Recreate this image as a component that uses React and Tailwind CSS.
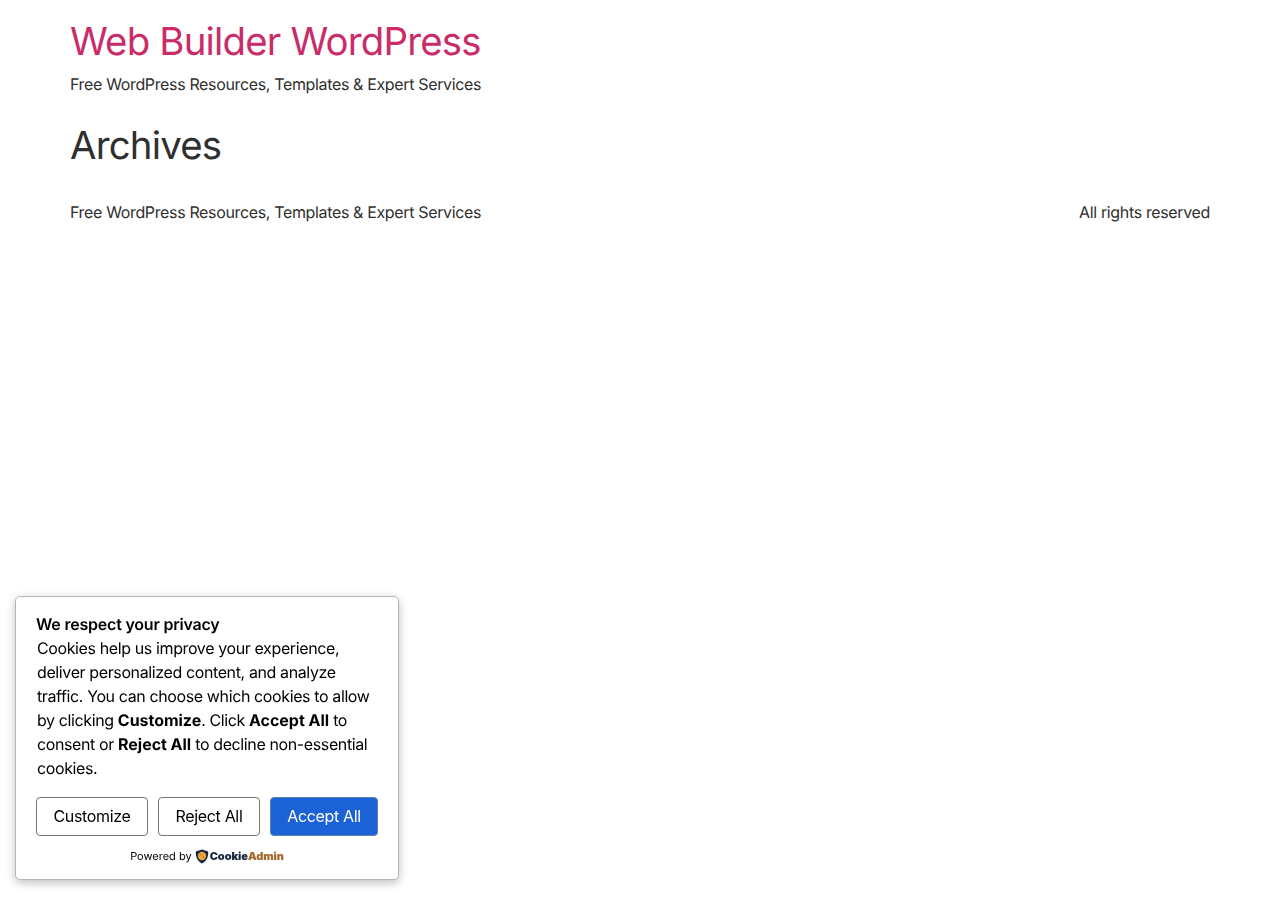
function CookieAdminLogo() {
  return (
    <span className="inline-flex items-center">
      <svg width="14" height="15" viewBox="0 0 14 15" className="-ml-px mr-px">
        <path d="M7 0.5 L13.2 2.4 C13.4 7.5 12 11.8 7 14.5 C2 11.8 0.6 7.5 0.8 2.4 Z" fill="#16263f" />
        <circle cx="7" cy="7" r="4.2" fill="#e9a440" />
        <circle cx="5.8" cy="6" r="0.6" fill="#9a5f1e" />
        <circle cx="8.4" cy="8.2" r="0.6" fill="#9a5f1e" />
      </svg>
      <span className="text-[11px] font-black leading-none tracking-[-0.05px] text-[#16263f]">Cookie</span>
      <span className="text-[11px] font-black leading-none tracking-[-0.05px] text-[#a5682a]">Admin</span>
    </span>
  );
}

export default function App() {
  return (
    <div className="min-h-[900px] bg-white font-['Inter',sans-serif] text-[16px] leading-6 tracking-[-0.022em] text-[#2f2f2f] [text-rendering:geometricPrecision]">
      <div className="px-[70px]">
        <header className="pt-[16px]">
          <h1 className="text-[38.4px] font-normal leading-[52px] tracking-[-0.021em] text-[#c92c68]">Web Builder WordPress</h1>
          <p className="mt-[4px]">Free WordPress Resources, Templates &amp; Expert Services</p>
        </header>
        <h2 className="mt-[25px] text-[38.4px] font-normal leading-[50px] tracking-[-0.021em]">Archives</h2>
        <footer className="mt-[29px] flex justify-between">
          <span>Free WordPress Resources, Templates &amp; Expert Services</span>
          <span>All rights reserved</span>
        </footer>
      </div>

      <div className="fixed bottom-[20px] left-[15px] h-[284px] w-[384px] rounded-[5px] border border-[#b5b5b5] bg-white px-[20px] pt-[15px] text-black shadow-[0_3px_10px_rgba(0,0,0,0.25)]">
        <p className="font-semibold tracking-[-0.013em]">We respect your privacy</p>
        <p className="pl-px tracking-[-0.024em]">
          Cookies help us improve your experience, deliver personalized content, and analyze traffic. You can choose which cookies to allow by clicking <strong className="font-bold tracking-[-0.002em]">Customize</strong>. Click <strong className="font-bold tracking-[-0.002em]">Accept All</strong> to consent or <strong className="font-bold tracking-[-0.002em]">Reject All</strong> to decline non-essential cookies.
        </p>
        <div className="mt-[17px] flex gap-[10px] tracking-[-0.021em]">
          <button className="h-[39px] w-[112px] rounded-[4px] border border-[#767676] bg-white pb-px">Customize</button>
          <button className="h-[39px] w-[102px] rounded-[4px] border border-[#767676] bg-white pb-px">Reject All</button>
          <button className="h-[39px] w-[108px] rounded-[4px] border border-[#5f7fae] bg-[#1a62d6] pb-px text-white">Accept All</button>
        </div>
        <div className="mt-[10px] flex items-center justify-center gap-[4px] text-[11px] leading-[20px] tracking-normal">
          <span>Powered by</span>
          <CookieAdminLogo />
        </div>
      </div>
    </div>
  );
}
